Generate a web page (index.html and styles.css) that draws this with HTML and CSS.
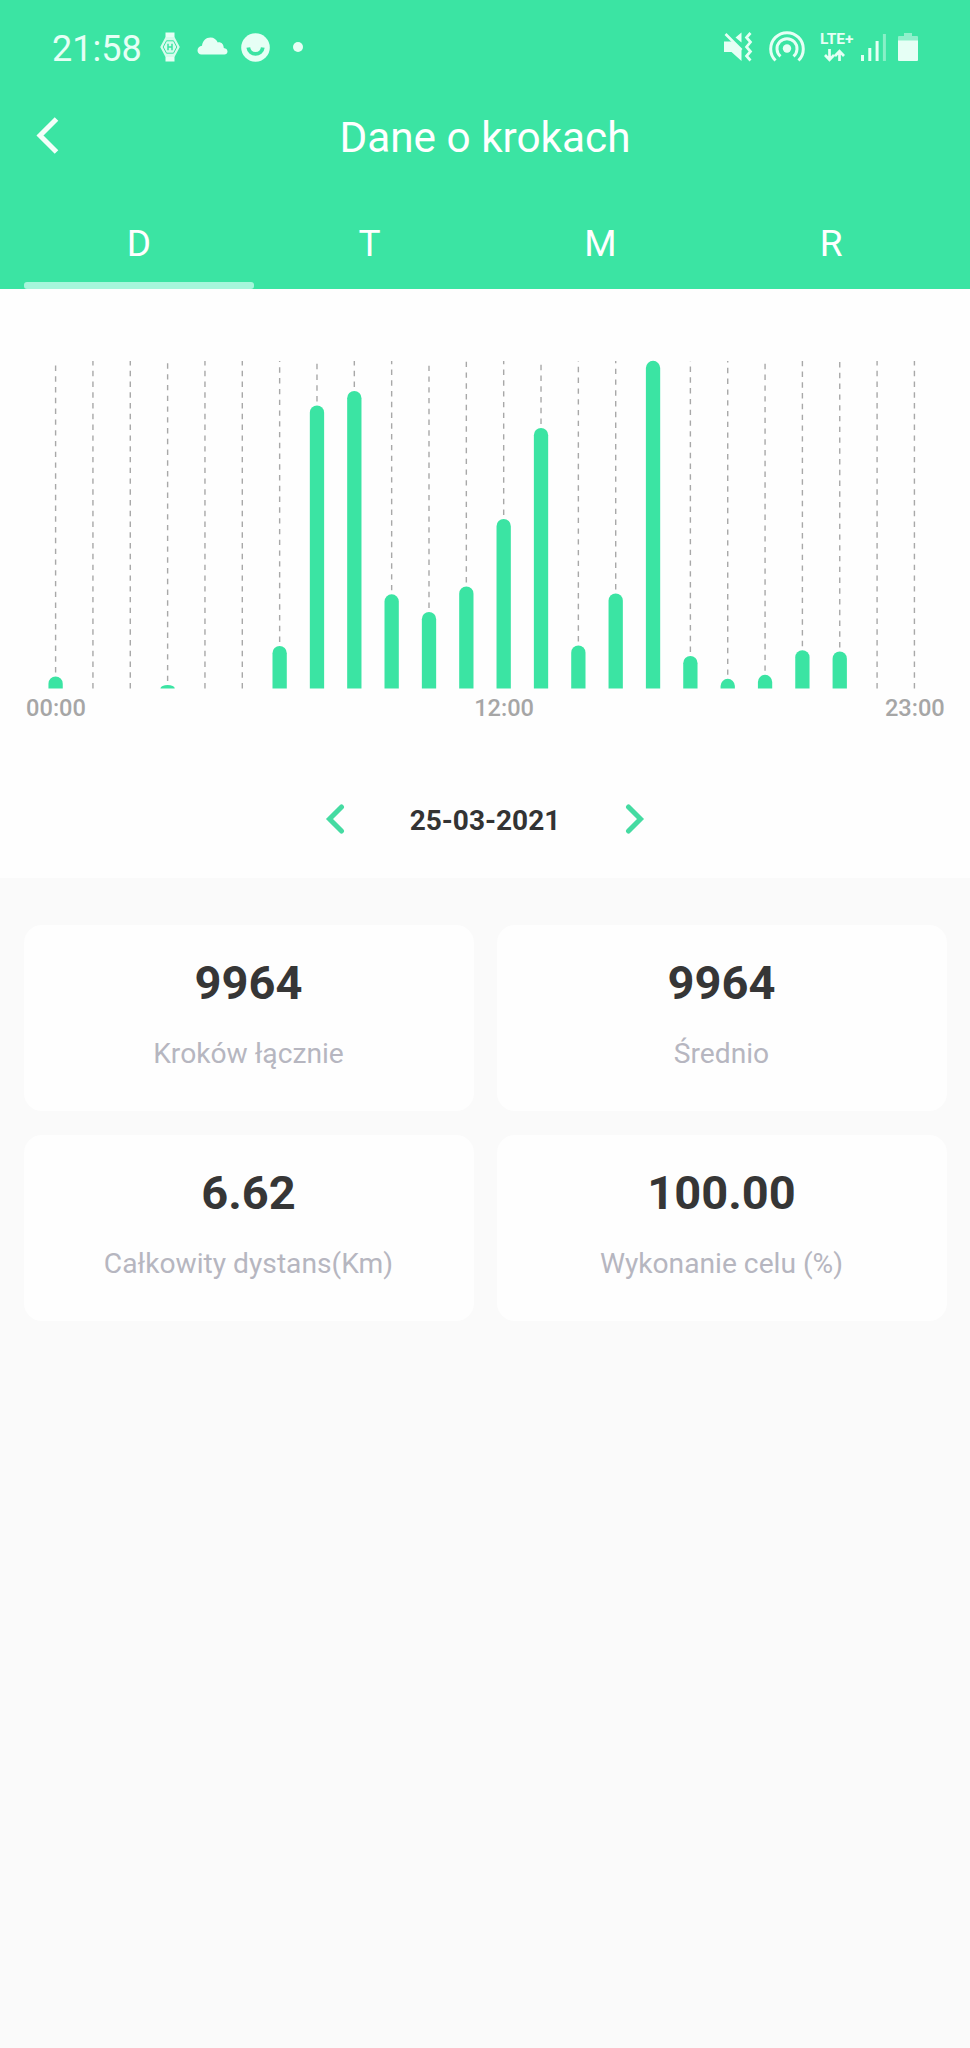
FILE: index.html
```html
<!DOCTYPE html>
<html lang="pl">
<head>
  <meta charset="UTF-8" />
  <title>Dane o krokach</title>
  <link rel="stylesheet" href="styles.css">
</head>
<body>

<header>
  <div class="status-bar">
    <div class="status-left">
      <span class="clock">21:58</span>
      <svg class="icon-watch" width="20" height="30" viewBox="0 0 20 30">
        <path d="M5.5 0.5h9v5h-9zM5.5 24.5h9v5h-9z" fill="#e6fff5"/>
        <path d="M5.5 5h9l5.3 10-5.3 10h-9L0.200 15z" fill="#d5fcec"/>
        <path d="M6.500 8.800h7l3.300 6.200-3.300 6.200h-7L3.200 15z" fill="none" stroke="#3be4a3"/>
        <path d="M8 11.800v6.500M12 11.800v6.500M8 15h4" fill="none" stroke="#3be4a3" stroke-width="1.500"/>
      </svg>
      <svg class="icon-cloud" width="31" height="18" viewBox="0 0 31 18">
        <path d="M4.500 17.500C2 17.500 0.500 15.500 0.500 13.500C0.500 11 2.500 9 5 8.800C5.500 4 9 0.500 13.500 0.500C17 0.500 19.500 2.500 20.800 5.500C24 4.800 26.500 7 26.800 11C29 11.300 30.500 12.500 30.500 14.500C30.500 16.500 29 17.500 27.500 17.500Z" fill="#e6fff5"/>
      </svg>
      <svg class="icon-smile" width="29" height="29" viewBox="0 0 29 29">
        <circle cx="14.500" cy="14.500" r="14.300" fill="#e6fff5"/>
        <path d="M7.300 14.500c1 8.500 13.500 8.500 14.500 0" fill="none" stroke="#3be4a3" stroke-width="3.800"/>
      </svg>
      <span class="dot"></span>
    </div>
    <div class="status-right">
      <svg class="icon-mute" width="30" height="30" viewBox="0 0 30 30">
        <path d="M1 9.500h9L18.500 18v11L8.500 20H1z" fill="#e6fff5"/>
        <path d="M2.500 2L18.500 18" stroke="#e6fff5" stroke-width="2.600"/>
        <path d="M12.500 5.500l6-5v10z" fill="#e6fff5"/>
        <path d="M27.500 1l-4 4.500 4 4.500-4 5 4 4.500-4 4.500 4 4.500" fill="none" stroke="#e6fff5" stroke-width="2.700"/>
      </svg>
      <svg class="icon-hotspot" width="36" height="31" viewBox="0 0 36 31" fill="none" stroke="#e6fff5" stroke-width="3">
        <circle cx="18" cy="17.500" r="4.200" fill="#e6fff5" stroke="none"/>
        <path d="M11.500 25.300a10 10 0 1 1 13 0"/>
        <path d="M6.500 29.500a16.300 16.300 0 1 1 23 0"/>
      </svg>
      <div class="network">
        <span>LTE+</span>
        <svg width="21" height="13" viewBox="0 0 21 13" fill="none" stroke="#e6fff5" stroke-width="2.700">
          <path d="M5.500 0v10.500M1 6l4.500 4.800L10 6M15.500 12V2M11 7l4.500-4.800L20 7"/>
        </svg>
      </div>
      <svg class="icon-signal" width="25" height="27" viewBox="0 0 25 27" fill="#e6fff5">
        <path d="M0 21h3v6H0zM7.300 14h3v13h-3zM14.600 7h3v20h-3z"/>
        <path d="M21.900 0h3v27h-3z" opacity="0.45"/>
      </svg>
      <svg class="icon-battery" width="20" height="28" viewBox="0 0 20 28">
        <path d="M6 0h8v3h5q1 0 1 1v4H0V4q0-1 1-1h5z" fill="#8ff0cb"/>
        <path d="M0 7.500h20V27q0 1-1 1H1q-1 0-1-1z" fill="#e6fff5"/>
      </svg>
    </div>
  </div>

  <div class="title-bar">
    <svg class="back" width="24" height="40" viewBox="0 0 24 40">
      <path d="M20.500 3L4 19.500 20.500 36" fill="none" stroke="#f4fffa" stroke-width="5"/>
    </svg>
    <h1>Dane o krokach</h1>
  </div>

  <nav class="tabs">
    <a class="tab active">D</a>
    <a class="tab">T</a>
    <a class="tab">M</a>
    <a class="tab">R</a>
  </nav>
</header>

<section class="chart-panel">
  <svg id="chart" width="970" height="471" viewBox="0 0 970 471"></svg>

  <div class="date-row">
    <svg width="20" height="32" viewBox="0 0 20 32">
      <path d="M16.500 4L4.500 16l12 12"/>
    </svg>
    <span class="date">25-03-2021</span>
    <svg width="20" height="32" viewBox="0 0 20 32">
      <path d="M3.500 4l12 12-12 12"/>
    </svg>
  </div>
</section>

<section class="stats">
  <div class="card">
    <div class="value">9964</div>
    <div class="label">Kroków łącznie</div>
  </div>
  <div class="card">
    <div class="value">9964</div>
    <div class="label">Średnio</div>
  </div>
  <div class="card">
    <div class="value">6.62</div>
    <div class="label">Całkowity dystans(Km)</div>
  </div>
  <div class="card">
    <div class="value">100.00</div>
    <div class="label">Wykonanie celu (%)</div>
  </div>
</section>

<script>
  // bar height for every hour of the day
  const hours = [12, 0, 0, 3.4, 0, 0, 42.5, 283, 297.5, 94.2, 76.5, 102,
    169.5, 260.5, 43, 95, 327.7, 32.5, 9.7, 13.7, 38.3, 37, 0, 0];
  const labels = { 0: '00:00', 12: '12:00', 23: '23:00' };

  const chartTop = 72;
  const base = 399.5;
  const firstX = 55.6;
  const step = 37.34;
  const r = 7.15;

  let out = '';
  hours.forEach((h, i) => {
    const x = firstX + i * step;
    const y = base - h;

    // guide line runs upwards from the bar
    const start = h ? y - 4 : base;
    if (start > chartTop) {
      out += `<line class="guide" x1="${x}" y1="${start}" x2="${x}" y2="${chartTop}" />`;
    }
    if (h) {
      const ry = Math.min(r, h);
      out += `<path class="bar" d="M${x - r} ${base}V${y + ry}A${r} ${ry} 0 0 1 ${x + r} ${y + ry}V${base}Z" />`;
    }
    if (labels[i]) {
      out += `<text class="hour" x="${x + 0.4}" y="427">${labels[i]}</text>`;
    }
  });
  document.getElementById('chart').innerHTML = out;
</script>

</body>
</html>
```
FILE: styles.css
```css
* {
  box-sizing: border-box;
}

body {
  font-family: Roboto, 'Liberation Sans', sans-serif;
  background-color: #fafafa;
  margin: 0;
  padding: 0;
  min-height: 2048px;
}

svg {
  display: block;
  flex-shrink: 0;
}

header {
  background-color: #3be4a3;
  color: white;
  height: 289px;
}

.status-bar {
  display: flex;
  justify-content: space-between;
  height: 97px;
  padding: 0 52px;
  color: #e6fff5;
}

.status-left,
.status-right {
  display: flex;
  align-items: flex-start;
}

.clock {
  font-size: 36px;
  line-height: 98px;
  width: 89px;
}

.icon-watch {
  margin: 32px 0 0 19px;
}

.icon-cloud {
  margin: 37px 0 0 17px;
}

.icon-smile {
  margin: 33px 0 0 13px;
}

.dot {
  width: 10px;
  height: 10px;
  margin: 42px 0 0 23px;
  border-radius: 50%;
  background-color: #e6fff5;
}

.icon-mute {
  margin: 32px 16px 0 0;
}

.icon-hotspot {
  margin: 31px 15px 0 0;
}

.network {
  width: 35px;
  margin: 30px 6px 0 0;
  font-size: 15.5px;
  font-weight: 700;
  line-height: 18px;
}

.network svg {
  margin: 1px 0 0 4px;
}

.icon-signal {
  margin: 34px 12px 0 0;
}

.icon-battery {
  margin-top: 33px;
}

.title-bar {
  display: grid;
  grid-template-columns: 59px 1fr 59px;
  align-items: center;
  height: 82px;
}

.back {
  margin: -4px 0 0 36px;
}

.title-bar h1 {
  margin: -2px 0 0;
  font-size: 42.3px;
  font-weight: 400;
  text-align: center;
}

.tabs {
  display: flex;
  height: 110px;
  padding: 0 23.5px;
}

.tab {
  position: relative;
  flex: 1;
  padding-top: 20px;
  font-size: 37px;
  line-height: 90px;
  text-align: center;
}

.tab.active::after {
  content: '';
  position: absolute;
  left: 0;
  right: 0;
  bottom: 0;
  height: 7.5px;
  border-radius: 3px;
  background-color: #a6f6db;
}

.chart-panel {
  height: 589px;
  background-color: #fefefe;
}

.guide {
  stroke: #a8a8a8;
  stroke-width: 1.4;
  stroke-dasharray: 5.4 5.37;
}

.bar {
  fill: #3be4a3;
}

.hour {
  font-size: 23.6px;
  font-weight: 500;
  fill: #a6a6a6;
  text-anchor: middle;
}

.date-row {
  display: flex;
  justify-content: center;
  align-items: center;
  height: 120px;
}

.date-row svg {
  margin-top: -2px;
  fill: none;
  stroke: #45dba2;
  stroke-width: 5;
  stroke-linecap: round;
}

.date {
  width: 280px;
  font-size: 28px;
  font-weight: 700;
  color: #333;
  text-align: center;
}

.stats {
  display: grid;
  grid-template-columns: 1fr 1fr;
  gap: 24px 23px;
  padding: 47px 23.5px;
}

.card {
  height: 186px;
  padding-top: 28px;
  background-color: #fefefe;
  border-radius: 18px;
  text-align: center;
}

.value {
  font-size: 47px;
  font-weight: 700;
  line-height: 60px;
  color: #363636;
}

.label {
  margin-top: 21px;
  font-size: 28.2px;
  line-height: 40px;
  color: #b6b6c0;
}
```
